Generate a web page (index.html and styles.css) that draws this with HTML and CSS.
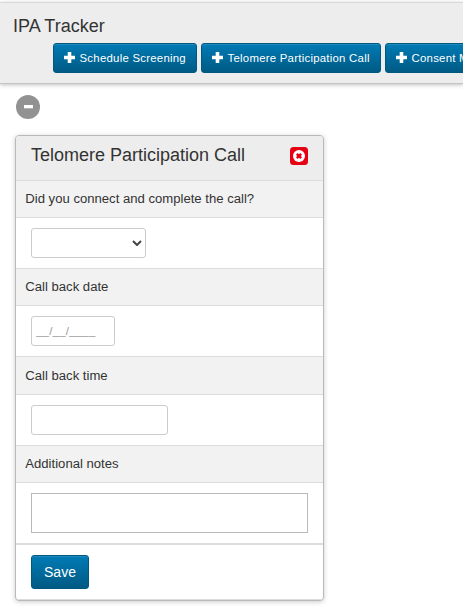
FILE: index.html
```html
<!DOCTYPE html>
<html lang="en">
<head>
<meta charset="utf-8">
<title>IPA Tracker</title>
<link rel="stylesheet" href="styles.css">
</head>
<body>
<header class="header">
  <h1 class="app-title">IPA Tracker</h1>
  <nav class="actions">
    <button class="btn btn-first"><svg class="plus" viewBox="0 0 11 11"><path d="M3.7 0h3.6v3.7H11v3.6H7.3V11H3.7V7.3H0V3.7h3.7z"/></svg><span class="btn-text">Schedule Screening</span></button>
    <button class="btn btn-second"><svg class="plus" viewBox="0 0 11 11"><path d="M3.7 0h3.6v3.7H11v3.6H7.3V11H3.7V7.3H0V3.7h3.7z"/></svg><span class="btn-text">Telomere Participation Call</span></button>
    <button class="btn"><svg class="plus" viewBox="0 0 11 11"><path d="M3.7 0h3.6v3.7H11v3.6H7.3V11H3.7V7.3H0V3.7h3.7z"/></svg><span class="btn-text">Consent Meeting</span></button>
  </nav>
</header>
<main>
  <button class="collapse" aria-label="Collapse"><svg viewBox="0 0 24 24"><circle cx="12" cy="12" r="12" fill="#929292"/><path d="M8 10h9v3.3H8z" fill="#fff"/></svg></button>
  <form class="card">
    <div class="card-head">
      <h2 class="card-title">Telomere Participation Call</h2>
      <svg class="close" viewBox="0 0 18 18"><rect width="18" height="18" rx="3.5" fill="#e50014"/><circle cx="9" cy="9" r="6" fill="#fff"/><path d="M6.8 6.8l4.4 4.4M11.2 6.8l-4.4 4.4" stroke="#e50014" stroke-width="2.5"/></svg>
    </div>
    <label class="label" for="connected">Did you connect and complete the call?</label>
    <div class="field">
      <div class="select" id="connected"><svg viewBox="0 0 10 6"><path d="M1 1l4 4 4-4" fill="none" stroke="#444" stroke-width="2"/></svg></div>
    </div>
    <label class="label" for="date">Call back date</label>
    <div class="field"><input class="input date" id="date" placeholder="__/__/____"></div>
    <label class="label label-time" for="time">Call back time</label>
    <div class="field"><input class="input time" id="time"></div>
    <label class="label" for="notes">Additional notes</label>
    <div class="field field-notes"><textarea class="notes" id="notes"></textarea></div>
    <div class="card-foot"><button type="button" class="btn save">Save</button></div>
  </form>
</main>
</body>
</html>
```
FILE: styles.css
```css
* { box-sizing: border-box; }
body {
  margin: 0;
  padding-top: 2px;
  height: 614px;
  overflow: hidden;
  background: #fff;
  color: #333;
  font-family: "Liberation Sans", Arial, sans-serif;
}
.header {
  height: 82px;
  overflow: hidden;
  border-top: 1px solid #d8d8d8;
  border-bottom: 1px solid #c4c4c4;
  background: #ededed;
  box-shadow: 0 1px 4px rgba(0, 0, 0, .25);
}
.app-title {
  margin: 0;
  padding: 11px 0 0 13px;
  height: 40px;
  font-size: 18px;
  font-weight: 400;
  line-height: 24px;
}
.actions {
  display: flex;
  gap: 4px;
  padding-left: 53px;
}
.btn {
  display: flex;
  flex: none;
  align-items: center;
  height: 30px;
  padding: 0 9px 0 10px;
  border: 1px solid #00587f;
  border-radius: 3px;
  background: linear-gradient(#007bb5, #005a84);
  box-shadow: inset 0 1px 0 rgba(255, 255, 255, .12);
  color: #fff;
  font: 11.4px "Liberation Sans", Arial, sans-serif;
  white-space: nowrap;
}
.btn-first { width: 144px; }
.btn-second { width: 180px; }
.btn-text { letter-spacing: .25px; }
.plus {
  flex: none;
  width: 11px;
  height: 11px;
  margin: 0 4.5px 1px 0;
  fill: #fff;
}
.collapse {
  display: block;
  width: 24px;
  height: 24px;
  margin: 11px 0 16px 15.5px;
  padding: 0;
  border: 0;
  background: none;
}
.collapse svg { display: block; }
.card {
  width: 309px;
  height: 466px;
  margin-left: 15px;
  overflow: hidden;
  border: 1px solid #b9b9b9;
  border-radius: 4px;
  background: #fff;
  box-shadow: 0 1px 5px rgba(0, 0, 0, .2);
}
.card-head {
  display: flex;
  justify-content: space-between;
  height: 45px;
  padding: 7px 15px 0;
  border-bottom: 1px solid #dcdcdc;
  background: #ededed;
}
.card-title {
  margin: 0;
  font-size: 18px;
  font-weight: 400;
  line-height: 24px;
}
.close {
  width: 18px;
  height: 18px;
  margin-top: 4px;
}
.label {
  display: block;
  height: 37px;
  padding-left: 9.3px;
  border-bottom: 1px solid #dcdcdc;
  background: #f2f2f2;
  font-size: 13.12px;
  line-height: 36px;
}
.label-time {
  height: 38px;
  line-height: 38px;
}
.field {
  height: 51px;
  padding: 10px 15px;
  border-bottom: 1px solid #dcdcdc;
}
.select, .input {
  display: block;
  height: 30px;
  border: 1px solid #ccc;
  border-radius: 3px;
  background: #fff;
}
.select {
  display: flex;
  align-items: center;
  justify-content: flex-end;
  width: 115px;
  padding-right: 3px;
}
.select svg {
  width: 10px;
  height: 6px;
}
.input {
  padding: 4px;
  font: 11.4px "Liberation Sans", Arial, sans-serif;
  letter-spacing: .25px;
}
.input::placeholder { color: #999; }
.date { width: 84px; }
.time { width: 137px; }
.field-notes {
  height: 62px;
  border-bottom-width: 2px;
}
.notes {
  display: block;
  width: 277px;
  height: 40px;
  border: 1px solid #b9b9b9;
  resize: none;
}
.card-foot {
  height: 55px;
  padding: 10px 15px;
  border-bottom: 1px solid #dcdcdc;
}
.save {
  justify-content: center;
  width: 58px;
  height: 34px;
  padding: 0;
  font-size: 14px;
}
```
